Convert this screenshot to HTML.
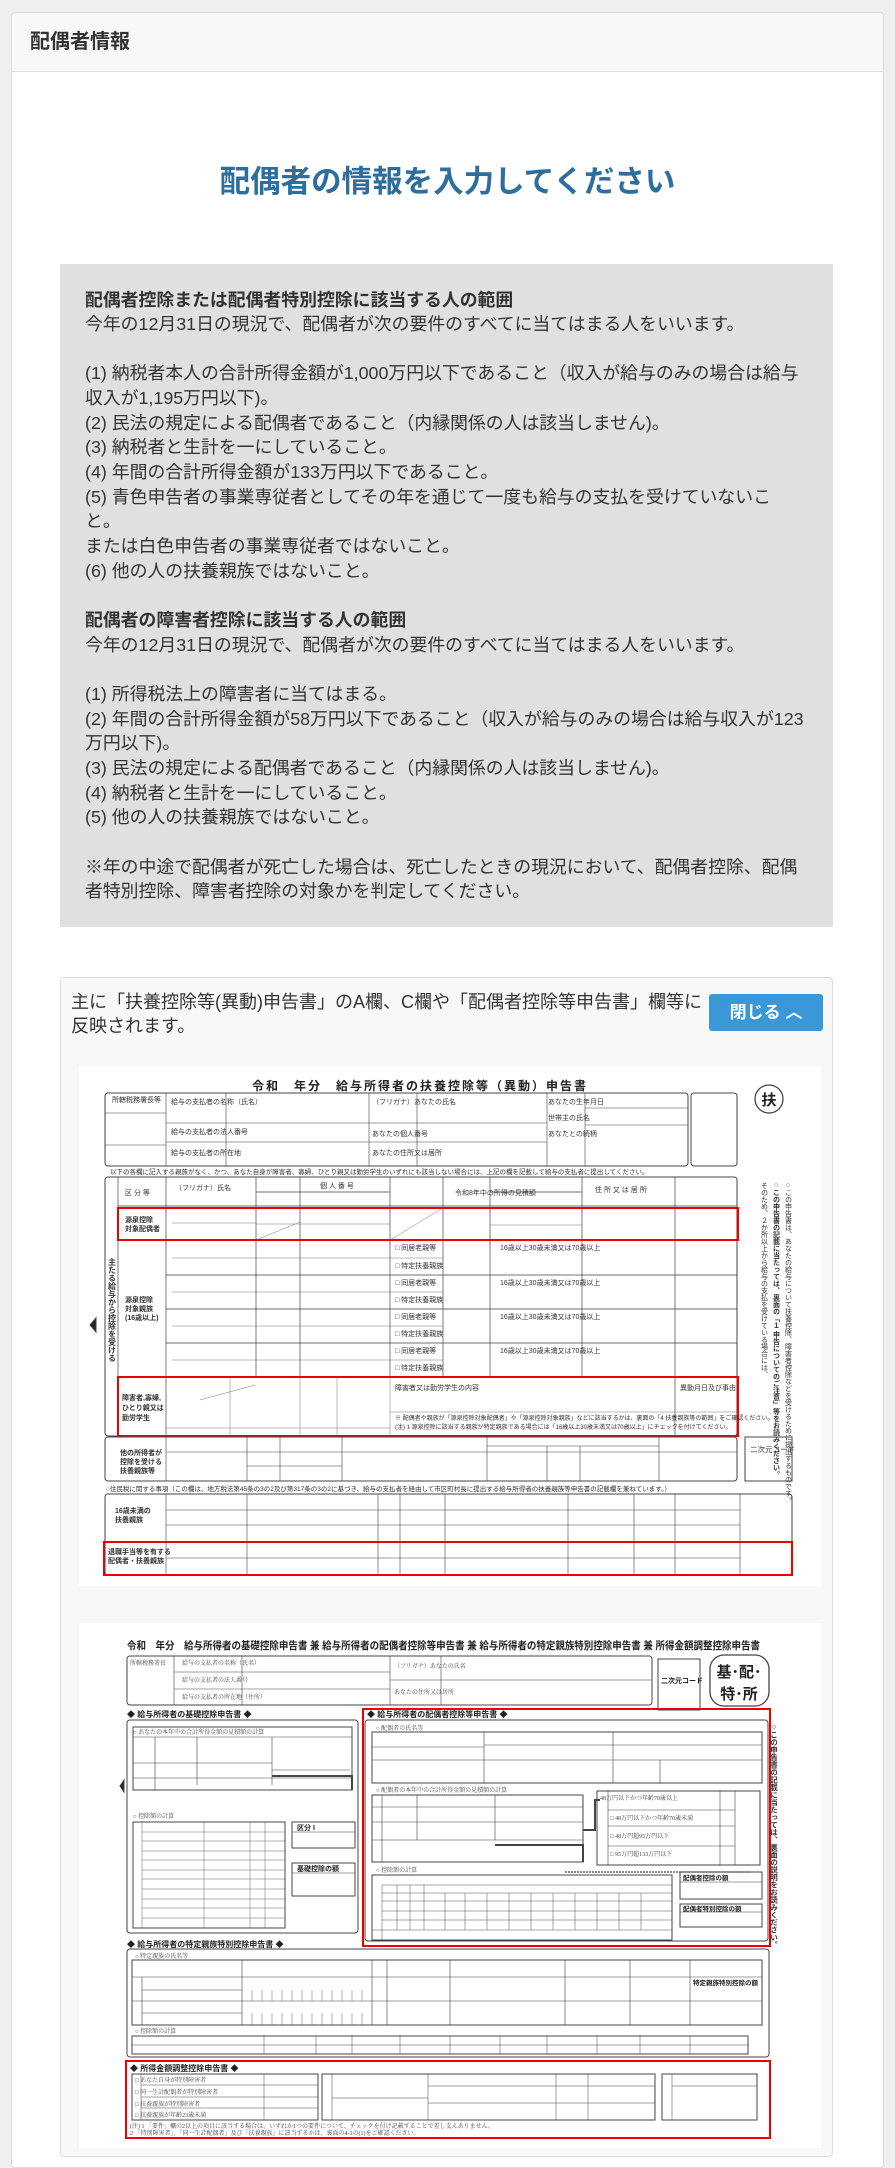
<!DOCTYPE html>
<html><head><meta charset="utf-8">
<style>
*{margin:0;padding:0;box-sizing:border-box}
body{width:895px;height:2168px;background:#efefef;font-family:"Liberation Sans","Noto Sans CJK JP",sans-serif;color:#333;position:relative;overflow:hidden}
.card{position:absolute;left:11px;top:12px;width:873px;height:2156px;background:#fff;border:1px solid #ddd;border-radius:4px}
.hd{height:59px;background:#f8f8f8;border-bottom:1px solid #ddd;border-radius:4px 4px 0 0;font-weight:bold;font-size:20px;line-height:59px;padding-left:18px;color:#333}
.title{position:absolute;left:0;width:895px;top:160px;text-align:center;font-size:30.5px;font-weight:bold;color:#2c6e9e;line-height:44px}
.gray{position:absolute;left:60px;top:264px;width:773px;height:663px;background:#e0e0e0;padding:23.5px 0 0 25px;font-size:17.85px;line-height:24.67px;color:#333}
.gray div{white-space:nowrap;height:24.67px}
.gray b{font-weight:bold}
.c2{position:absolute;left:60px;top:977px;width:773px;height:1180px;background:#f8f8f8;border:1px solid #ddd;border-radius:4px}
.c2t{position:absolute;left:10px;top:12px;font-size:18px;line-height:24px;white-space:nowrap;color:#333}
.btn{position:absolute;left:648px;top:16px;width:114px;height:37px;background:#3a98d8;border-radius:3px;color:#fff;font-weight:bold;font-size:17px;line-height:37px;text-align:center}
svg{position:absolute;left:0;top:0}
</style></head><body>
<div class="card"><div class="hd">配偶者情報</div></div>
<div class="title">配偶者の情報を入力してください</div>
<div class="gray">
<div><b>配偶者控除または配偶者特別控除に該当する人の範囲</b></div>
<div>今年の12月31日の現況で、配偶者が次の要件のすべてに当てはまる人をいいます。</div>
<div></div>
<div>(1) 納税者本人の合計所得金額が1,000万円以下であること（収入が給与のみの場合は給与</div>
<div>収入が1,195万円以下)。</div>
<div>(2) 民法の規定による配偶者であること（内縁関係の人は該当しません)。</div>
<div>(3) 納税者と生計を一にしていること。</div>
<div>(4) 年間の合計所得金額が133万円以下であること。</div>
<div>(5) 青色申告者の事業専従者としてその年を通じて一度も給与の支払を受けていないこ</div>
<div>と。</div>
<div>または白色申告者の事業専従者ではないこと。</div>
<div>(6) 他の人の扶養親族ではないこと。</div>
<div></div>
<div><b>配偶者の障害者控除に該当する人の範囲</b></div>
<div>今年の12月31日の現況で、配偶者が次の要件のすべてに当てはまる人をいいます。</div>
<div></div>
<div>(1) 所得税法上の障害者に当てはまる。</div>
<div>(2) 年間の合計所得金額が58万円以下であること（収入が給与のみの場合は給与収入が123</div>
<div>万円以下)。</div>
<div>(3) 民法の規定による配偶者であること（内縁関係の人は該当しません)。</div>
<div>(4) 納税者と生計を一にしていること。</div>
<div>(5) 他の人の扶養親族ではないこと。</div>
<div></div>
<div>※年の中途で配偶者が死亡した場合は、死亡したときの現況において、配偶者控除、配偶</div>
<div>者特別控除、障害者控除の対象かを判定してください。</div>
</div>
<div class="c2">
<div class="c2t">主に「扶養控除等(異動)申告書」のA欄、C欄や「配偶者控除等申告書」欄等に<br>反映されます。</div>
<div class="btn">閉じる ︿</div>
</div>

<svg width="895" height="2168" viewBox="0 0 895 2168" font-family="Liberation Serif, Noto Serif CJK SC, serif">
<g>
<rect x="79" y="1066" width="742" height="520" fill="#fff"/>
<rect x="79" y="1623" width="742" height="525" fill="#fff"/>
</g>
<!-- FORM 1 -->
<g fill="none" stroke="#444" stroke-width="1">
<text x="420" y="1090" font-size="12" font-weight="bold" fill="#222" stroke="none" text-anchor="middle" font-family="Liberation Sans, Noto Sans CJK JP, sans-serif" letter-spacing="2">令和　年分　給与所得者の扶養控除等（異動）申告書</text>
<rect x="105" y="1093" width="583" height="73" rx="3"/>
<rect x="691" y="1093" width="46" height="73" rx="3"/>
<path d="M166 1093V1166M226 1093V1166M369 1093V1166M417 1093V1166M547 1093V1166M585 1093V1166M166 1123H547M166 1142H547M585 1108H688M585 1125H688M105 1145H166M105 1113H166" stroke-width=".6"/>
<circle cx="769" cy="1099" r="14" stroke-width="1.3"/>
<text x="769" y="1105" font-size="15" font-weight="bold" fill="#222" stroke="none" text-anchor="middle" font-family="Liberation Sans, Noto Sans CJK JP, sans-serif">扶</text>
<rect x="105" y="1177" width="632" height="259" rx="3"/>
<path d="M118 1177V1436M166 1177V1436M256 1177V1377M300 1177V1377M390 1177V1377M443 1177V1377M490 1177V1377M582 1177V1377M675 1177V1436M118 1206H737M166 1240H737M166 1275H737M166 1309H737M166 1343H737M118 1377H737M256 1192H390M490 1192H582" stroke-width=".7"/>
<path d="M172 1223H256M256 1224H390M172 1258H256M256 1258H390M172 1292H256M256 1292H390M172 1326H256M256 1326H390M172 1360H256M256 1360H390M390 1258H443M390 1292H443M390 1326H443M390 1360H443M490 1225H582M230 1377V1436M300 1377V1436M337 1377V1436M390 1377V1436M390 1412H737M166 1428H390" stroke="#777" stroke-width=".5"/>
<path d="M256 1240L300 1222M390 1240L443 1208M200 1400L255 1385" stroke="#777" stroke-width=".5"/>
<rect x="118" y="1208" width="620" height="32" stroke="#e00" stroke-width="2"/>
<rect x="118" y="1377" width="620" height="59" stroke="#e00" stroke-width="2"/>
<path d="M96 1318L90 1325L96 1332Z" fill="#222"/>
<rect x="105" y="1437" width="632" height="44" rx="3"/>
<path d="M166 1437V1481M247 1437V1481M280 1437V1481M342 1437V1481M487 1437V1481M547 1446V1481M580 1446V1481M659 1437V1481M487 1446H659M166 1452H737M247 1466H342" stroke-width=".6"/>
<rect x="745" y="1437" width="47" height="44"/>
<rect x="105" y="1494" width="687" height="81" rx="3"/>
<path d="M166 1494V1575M247 1494V1575M378 1494V1575M400 1494V1575M445 1494V1575M568 1494V1575M634 1494V1575M675 1494V1575M740 1494V1575M166 1510H740M166 1525H740M166 1542H792M166 1558H740" stroke-width=".6"/>
<rect x="104" y="1542" width="688" height="33" stroke="#e00" stroke-width="2"/>
</g>
<g fill="#333" font-size="7" font-family="Liberation Sans, Noto Sans CJK JP, sans-serif">
<text x="112" y="1102">所轄税務署長等</text><text x="171" y="1104">給与の支払者の名称（氏名）</text><text x="171" y="1134">給与の支払者の法人番号</text><text x="171" y="1155">給与の支払者の所在地</text>
<text x="372" y="1104">（フリガナ）あなたの氏名</text><text x="372" y="1136">あなたの個人番号</text><text x="372" y="1155">あなたの住所又は居所</text>
<text x="548" y="1104">あなたの生年月日</text><text x="548" y="1120">世帯主の氏名</text><text x="548" y="1136">あなたとの続柄</text>
<text x="110" y="1174" font-size="6.5">以下の各欄に記入する親族がなく、かつ、あなた自身が障害者、寡婦、ひとり親又は勤労学生のいずれにも該当しない場合には、上記の欄を記載して給与の支払者に提出してください。</text>
<text x="125" y="1195">区 分 等</text><text x="175" y="1190">（フリガナ）氏名</text><text x="320" y="1188">個 人 番 号</text><text x="595" y="1192">住 所 又 は 居 所</text>
<text x="125" y="1222" font-weight="bold">源泉控除</text><text x="125" y="1231" font-weight="bold">対象配偶者</text>
<text x="125" y="1302" font-weight="bold">源泉控除</text><text x="125" y="1311" font-weight="bold">対象親族</text><text x="125" y="1320" font-weight="bold">(16歳以上)</text>
<text x="122" y="1400" font-weight="bold">障害者,寡婦,</text><text x="122" y="1410" font-weight="bold">ひとり親又は</text><text x="122" y="1420" font-weight="bold">勤労学生</text>
<text x="395" y="1390">障害者又は勤労学生の内容</text><text x="680" y="1390">異動月日及び事由</text>
<text x="120" y="1455" font-weight="bold">他の所得者が</text><text x="120" y="1464" font-weight="bold">控除を受ける</text><text x="120" y="1473" font-weight="bold">扶養親族等</text>
<text x="750" y="1452" font-size="7.5">二次元コード</text>
<text x="106" y="1491" font-size="6.5">○住民税に関する事項（この欄は、地方税法第45条の3の2及び第317条の3の2に基づき、給与の支払者を経由して市区町村長に提出する給与所得者の扶養親族等申告書の記載欄を兼ねています。）</text>
<text x="115" y="1513" font-weight="bold">16歳未満の</text><text x="115" y="1522" font-weight="bold">扶養親族</text>
<text x="108" y="1554" font-weight="bold">退職手当等を有する</text><text x="108" y="1563" font-weight="bold">配偶者・扶養親族</text>
<text x="455" y="1195">令和8年中の所得の見積額</text>
<text x="500" y="1250">16歳以上30歳未満又は70歳以上</text><text x="500" y="1285">16歳以上30歳未満又は70歳以上</text><text x="500" y="1319">16歳以上30歳未満又は70歳以上</text><text x="500" y="1353">16歳以上30歳未満又は70歳以上</text>
<text x="395" y="1250">□ 同居老親等</text><text x="395" y="1268">□ 特定扶養親族</text><text x="395" y="1285">□ 同居老親等</text><text x="395" y="1302">□ 特定扶養親族</text><text x="395" y="1319">□ 同居老親等</text><text x="395" y="1336">□ 特定扶養親族</text><text x="395" y="1353">□ 同居老親等</text><text x="395" y="1370">□ 特定扶養親族</text>
<text x="395" y="1420" font-size="6">※ 配偶者や親族が「源泉控除対象配偶者」や「源泉控除対象親族」などに該当するかは、裏面の「4 扶養親族等の範囲」をご確認ください。</text>
<text x="395" y="1429" font-size="6">(注) 1 源泉控除に該当する親族が特定親族である場合には「16歳以上30歳未満又は70歳以上」にチェックを付けてください。</text>
</g>
<g font-size="7" fill="#333" font-family="Liberation Sans, Noto Sans CJK JP, sans-serif">
<text x="788" y="1182" writing-mode="tb">○この申告書は、あなたの給与について扶養控除、障害者控除などを受けるために提出するものです。</text>
<text x="776" y="1182" writing-mode="tb" font-weight="bold">○この申告書の記載に当たっては、裏面の「１ 申告についてのご注意」等をお読みください。</text>
<text x="764" y="1182" writing-mode="tb">そのため、２か所以上から給与の支払を受けている場合には、</text>
</g>
<text x="112" y="1258" writing-mode="tb" font-size="8" font-weight="bold" fill="#333" font-family="Liberation Sans, Noto Sans CJK JP, sans-serif">主たる給与から控除を受ける</text>

<!-- FORM 2 -->
<g fill="none" stroke="#444" stroke-width="1">
<text x="127" y="1649" font-size="10.5" font-weight="bold" fill="#222" stroke="none" textLength="633" lengthAdjust="spacingAndGlyphs" font-family="Liberation Sans, Noto Sans CJK JP, sans-serif">令和　年分　給与所得者の基礎控除申告書 兼 給与所得者の配偶者控除等申告書 兼 給与所得者の特定親族特別控除申告書 兼 所得金額調整控除申告書</text>
<rect x="127" y="1656" width="525" height="49" rx="3"/>
<path d="M174 1656V1705M242 1656V1705M390 1656V1705M441 1656V1705M174 1672H390M174 1689H390M390 1680H652" stroke-width=".6"/>
<rect x="658" y="1659" width="42" height="51"/>
<rect x="710" y="1655" width="59" height="51" rx="14" stroke-width="1.3"/>
<text x="739" y="1677" font-size="15" font-weight="bold" fill="#222" stroke="none" text-anchor="middle" font-family="Liberation Sans, Noto Sans CJK JP, sans-serif">基･配･</text>
<text x="739" y="1699" font-size="15" font-weight="bold" fill="#222" stroke="none" text-anchor="middle" font-family="Liberation Sans, Noto Sans CJK JP, sans-serif">特･所</text>
<rect x="127" y="1720" width="231" height="213" rx="3"/>
<rect x="133" y="1727" width="219" height="63"/>
<path d="M133 1737H352M155 1737V1790M197 1737V1785M272 1737V1785M133 1763H272M133 1778H352M272 1770H350" stroke-width=".6"/>
<path d="M272 1776H352V1790" stroke-width="2"/>
<rect x="133" y="1822" width="152" height="106"/>
<path d="M142 1822V1928M204 1822V1928M250 1822V1928M265 1822V1928M142 1832H285M142 1841H285M142 1851H285M142 1860H285M142 1870H285M142 1879H285M142 1889H285M142 1899H285M142 1908H285M142 1918H285" stroke-width=".5" stroke="#666"/>
<rect x="292" y="1822" width="63" height="26"/><rect x="292" y="1863" width="63" height="33"/>
<path d="M292 1832H355M292 1873H355" stroke-width=".6"/>
<rect x="365" y="1720" width="403" height="221" rx="3"/>
<rect x="372" y="1732" width="390" height="51"/>
<path d="M484 1732V1783M613 1732V1783M660 1760V1783M372 1747H484M372 1760H762M484 1745H762" stroke-width=".6"/>
<rect x="372" y="1795" width="211" height="67"/>
<path d="M382 1795V1862M417 1795V1840M495 1795V1840M372 1807H583M372 1822H583M372 1840H583" stroke-width=".6"/>
<path d="M495 1845H583V1862M583 1830H595V1800H600" stroke-width="2"/>
<rect x="597" y="1791" width="163" height="74"/>
<path d="M608 1791V1865M720 1791V1865M735 1791V1865M608 1810H735M608 1826H735M608 1846H735" stroke-width=".6"/>
<path d="M565 1872H750" stroke-dasharray="2 1" stroke-width="1.2"/>
<rect x="372" y="1875" width="300" height="65"/>
<path d="M382 1885V1940M397 1885V1930M410 1885V1930M424 1885V1930M445 1893V1930M465 1893V1930M487 1893V1930M509 1893V1930M531 1893V1930M553 1893V1930M575 1893V1930M597 1893V1930M619 1893V1930M641 1893V1930M382 1885H672M382 1893H672M382 1901H672M382 1911H672M382 1920H672M372 1930H672" stroke-width=".5" stroke="#555"/>
<rect x="680" y="1872" width="82" height="27"/><rect x="680" y="1904" width="82" height="23"/>
<path d="M680 1882H762M680 1912H762" stroke-width=".6"/>
<rect x="363" y="1709" width="407" height="237" stroke="#e00" stroke-width="2"/>
<rect x="127" y="1949" width="642" height="108" rx="3"/>
<rect x="132" y="1960" width="630" height="65"/>
<path d="M142 1977V2025M242 1960V2025M372 1960V2025M387 1960V2025M450 1960V2025M565 1960V2025M630 1960V2025M690 1960V2025M132 1977H762M142 1990H242M132 2001H762M142 2013H242M690 1977H762" stroke-width=".6"/>
<path d="M252 1990V2001M262 1990V2001M272 1990V2001M282 1990V2001M292 1990V2001M302 1990V2001M312 1990V2001M322 1990V2001M332 1990V2001M342 1990V2001M352 1990V2001M362 1990V2001M252 2013V2025M262 2013V2025M272 2013V2025M282 2013V2025M292 2013V2025M302 2013V2025M312 2013V2025M322 2013V2025M332 2013V2025M342 2013V2025M352 2013V2025M362 2013V2025" stroke-width=".5" stroke="#666"/>
<rect x="132" y="2036" width="616" height="18"/>
<path d="M264 2036V2054M316 2036V2054M352 2036V2054M400 2036V2054M450 2036V2054M500 2036V2054M547 2036V2054M597 2036V2054M640 2036V2054M690 2036V2054M132 2045H748" stroke-width=".5"/>
<rect x="132" y="2074" width="186" height="46"/>
<path d="M141 2074V2120M264 2074V2120M141 2085H318M141 2097H318M141 2108H318" stroke-width=".5"/>
<rect x="322" y="2074" width="333" height="46"/>
<path d="M332 2074V2120M428 2074V2120M556 2074V2120M588 2074V2120M428 2086H655M428 2103H655M332 2098H428" stroke-width=".5"/>
<rect x="662" y="2074" width="95" height="46"/>
<path d="M672 2074V2120M672 2086H757" stroke-width=".5"/>
<rect x="126" y="2061" width="644" height="77" stroke="#e00" stroke-width="2"/>
<path d="M124 1780L120 1786L124 1792Z" fill="#222"/>
</g>
<g fill="#222" font-size="8" font-weight="bold" font-family="Liberation Sans, Noto Sans CJK JP, sans-serif">
<text x="127" y="1717">◆ 給与所得者の基礎控除申告書 ◆</text>
<text x="367" y="1717">◆ 給与所得者の配偶者控除等申告書 ◆</text>
<text x="127" y="1947">◆ 給与所得者の特定親族特別控除申告書 ◆</text>
<text x="130" y="2071">◆ 所得金額調整控除申告書 ◆</text>
<text x="661" y="1683" font-size="7">二次元コード</text>
<text x="297" y="1830" font-size="7">区分 I</text><text x="297" y="1871" font-size="7">基礎控除の額</text>
<text x="683" y="1880" font-size="6.5">配偶者控除の額</text><text x="683" y="1911" font-size="6.5">配偶者特別控除の額</text>
<text x="693" y="1985" font-size="6.5">特定親族特別控除の額</text>
</g>
<g fill="#444" font-size="6" font-family="Liberation Serif, Noto Serif CJK SC, serif">
<text x="133" y="1734">○ あなたの本年中の合計所得金額の見積額の計算</text>
<text x="133" y="1818">○ 控除額の計算</text>
<text x="376" y="1730">○ 配偶者の氏名等</text>
<text x="376" y="1792">○ 配偶者の本年中の合計所得金額の見積額の計算</text>
<text x="376" y="1872">○ 控除額の計算</text>
<text x="135" y="1958">○ 特定親族の氏名等</text>
<text x="135" y="2033">○ 控除額の計算</text>
<text x="182" y="1665">給与の支払者の名称（氏名）</text><text x="182" y="1682">給与の支払者の法人番号</text><text x="182" y="1699">給与の支払者の所在地（住所）</text>
<text x="394" y="1668">（フリガナ）あなたの氏名</text><text x="394" y="1694">あなたの住所又は居所</text><text x="130" y="1665">所轄税務署長</text>
<text x="600" y="1800">48万円以下かつ年齢70歳以上</text><text x="610" y="1820">□ 48万円以下かつ年齢70歳未満</text><text x="610" y="1838">□ 48万円超95万円以下</text><text x="610" y="1856">□ 95万円超133万円以下</text>
<text x="135" y="2082">□ あなた自身が特別障害者</text><text x="135" y="2094">□ 同一生計配偶者が特別障害者</text><text x="135" y="2106">□ 扶養親族が特別障害者</text><text x="135" y="2117">□ 扶養親族が年齢23歳未満</text>
<text x="130" y="2128">(注) 1 「要件」欄の2以上の項目に該当する場合は、いずれか1つの要件について、チェックを付け記載することで差し支えありません。</text>
<text x="130" y="2135">2 「特別障害者」、「同一生計配偶者」及び「扶養親族」に該当するかは、裏面の4-1の(1)をご確認ください。</text>
</g>
<text x="774" y="1722" writing-mode="tb" font-size="7.5" font-weight="bold" fill="#333" font-family="Liberation Sans, Noto Sans CJK JP, sans-serif">○この申告書の記載に当たっては、裏面の説明をお読みください。</text>
</svg>
</body></html>
